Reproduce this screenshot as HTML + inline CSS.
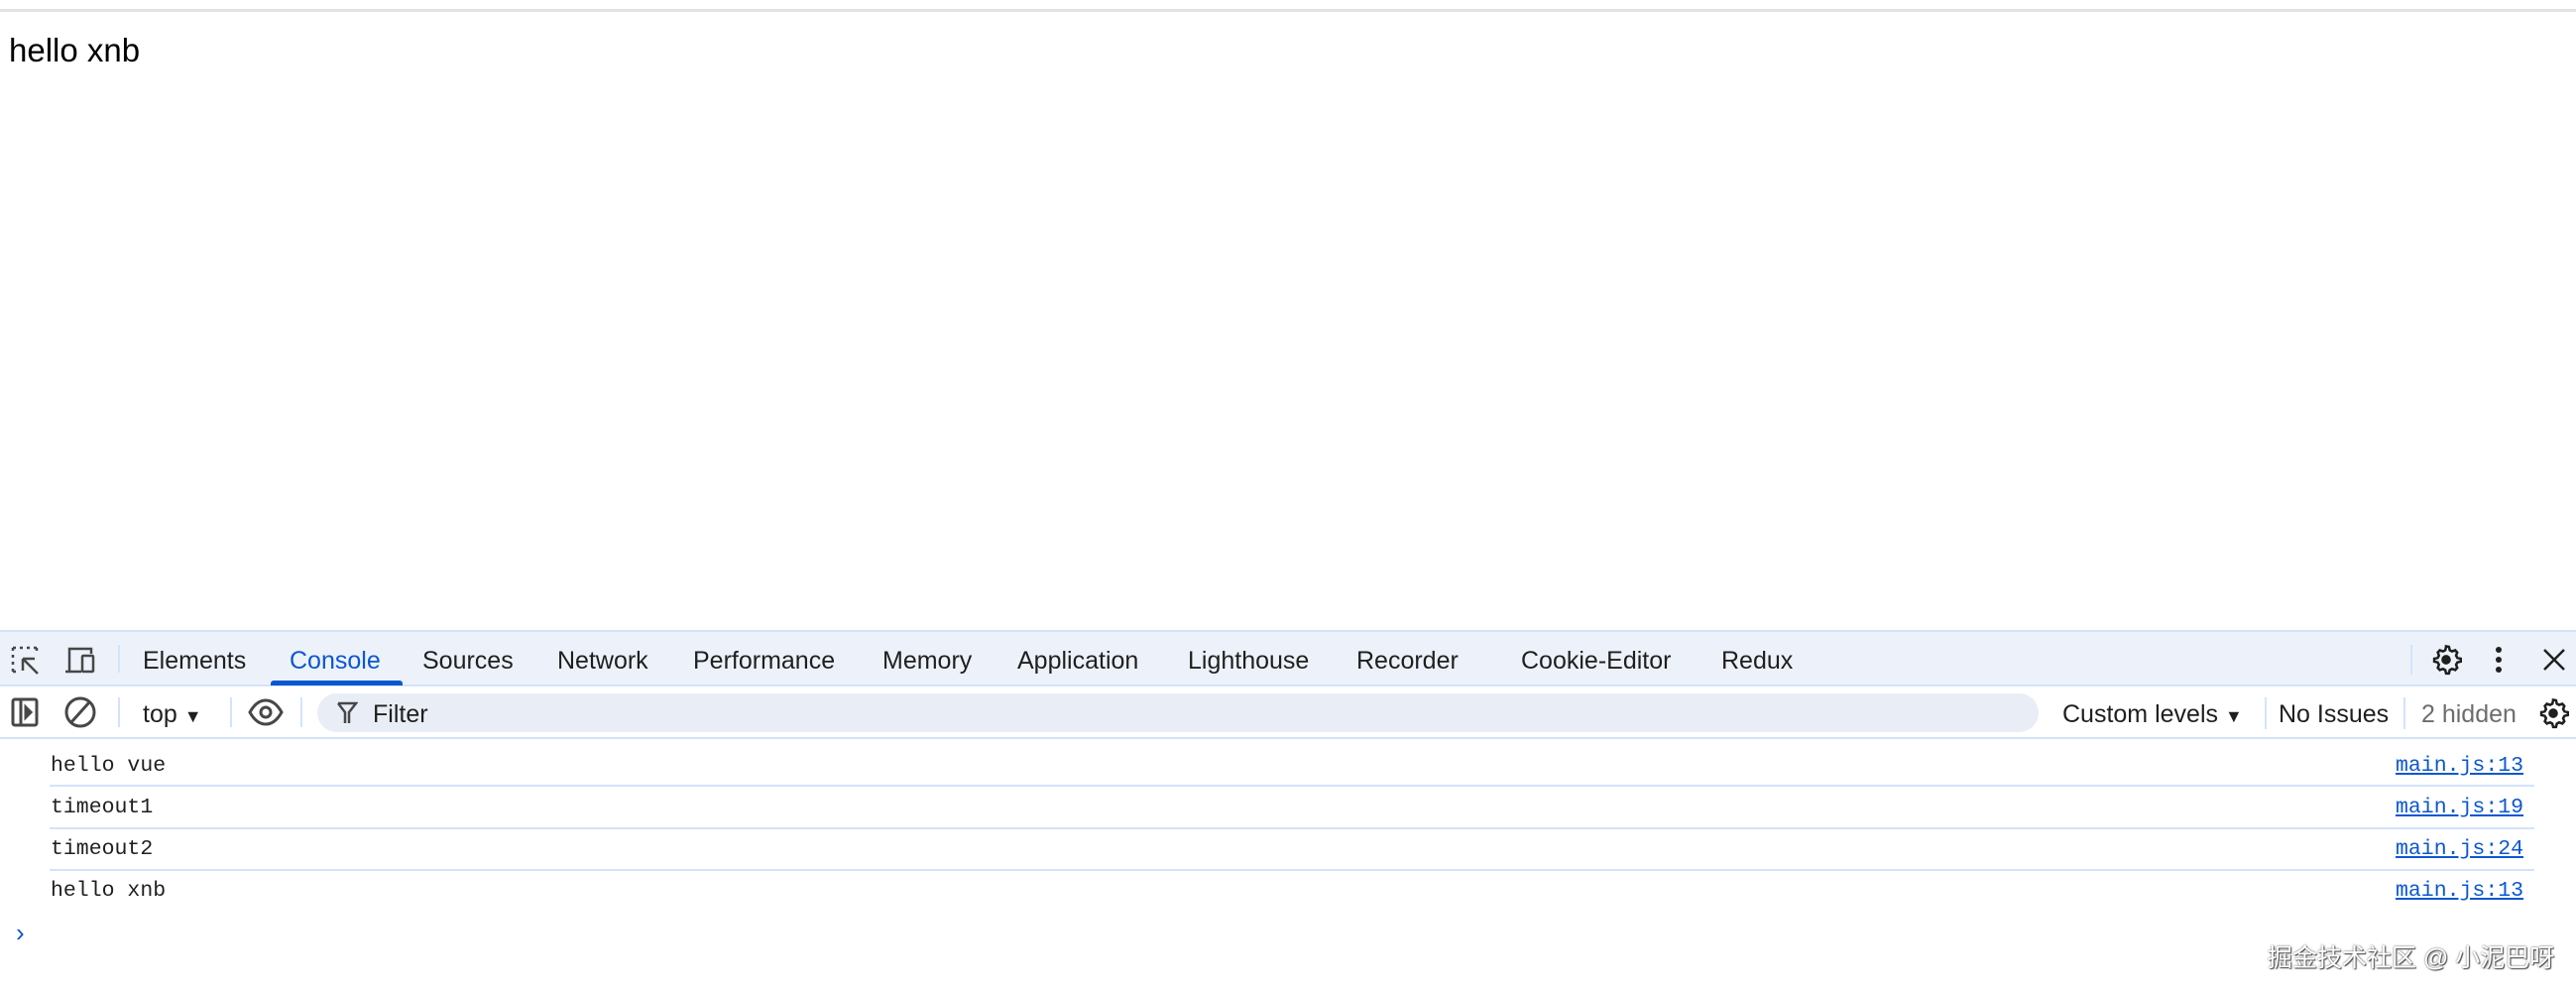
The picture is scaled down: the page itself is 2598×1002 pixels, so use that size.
<!DOCTYPE html>
<html><head><meta charset="utf-8"><style>
*{margin:0;padding:0;box-sizing:border-box}
body{width:2598px;height:1002px;background:#fff;position:relative;overflow:hidden;font-family:"Liberation Sans",sans-serif;color:#1f1f1f}
.a{position:absolute;white-space:nowrap}
.tab{position:absolute;top:652px;font-size:25px;color:#1f1f1f}
.mono{font-family:"Liberation Mono",monospace;font-size:21.5px;color:#1f1f1f}
.link{font-family:"Liberation Mono",monospace;font-size:21.5px;color:#0b57d0;text-decoration:underline}
.sep{position:absolute;width:2px;background:#d3e3fd}
.tb{font-size:25px;top:706px}
</style></head><body>
<div class="a" style="left:0;top:9px;width:2598px;height:3px;background:#e3e3e3"></div>
<div class="a" style="left:9px;top:32px;font-size:33px;color:#000">hello xnb</div>

<div class="a" style="left:0;top:635px;width:2598px;height:57px;background:#edf2fa;border-top:2px solid #d3e3fd;border-bottom:2px solid #d3e3fd"></div>
<svg class="a" style="left:10px;top:650px" width="32" height="32" viewBox="0 0 32 32" fill="none" stroke="#474747" stroke-width="2.5">
<path d="M3 3h3M10 3h3M17 3h3M24 3h3M27 3v3M3 3v3M3 10v3M3 17v3M3 24v3M3 27h3" /><path d="M13 14l12 0M13 14v12M13 14l15 15"/></svg>
<svg class="a" style="left:64px;top:650px" width="36" height="32" viewBox="0 0 36 32" fill="none" stroke="#474747" stroke-width="2.5">
<path d="M6 26V4h22v5M2 27h16"/><rect x="19" y="11" width="11" height="16" rx="1"/></svg>
<div class="sep" style="left:119px;top:650px;height:28px"></div>
<div class="tab" style="left:144px">Elements</div>
<div class="tab" style="left:292px;color:#0b57d0">Console</div>
<div class="a" style="left:273px;top:686px;width:133px;height:5px;background:#0b57d0;border-radius:3px 3px 0 0"></div>
<div class="tab" style="left:426px">Sources</div>
<div class="tab" style="left:562px">Network</div>
<div class="tab" style="left:699px">Performance</div>
<div class="tab" style="left:890px">Memory</div>
<div class="tab" style="left:1026px">Application</div>
<div class="tab" style="left:1198px">Lighthouse</div>
<div class="tab" style="left:1368px">Recorder</div>
<div class="tab" style="left:1534px">Cookie-Editor</div>
<div class="tab" style="left:1736px">Redux</div>
<div class="sep" style="left:2431px;top:650px;height:30px"></div>
<svg class="a" style="left:2450px;top:648px" width="34" height="34" viewBox="0 0 24 24" fill="none" stroke="#1f1f1f" stroke-width="1.8"><path d="M12 2.5l2 .3.6 2.4 1.6.9 2.3-.8 1.4 1.5-.8 2.3.9 1.6 2.4.6v2l-2.4.6-.9 1.6.8 2.3-1.4 1.5-2.3-.8-1.6.9-.6 2.4h-2l-.6-2.4-1.6-.9-2.3.8-1.4-1.5.8-2.3-.9-1.6-2.4-.6v-2l2.4-.6.9-1.6-.8-2.3 1.4-1.5 2.3.8 1.6-.9.6-2.4z"/><circle cx="12" cy="12" r="2.5" fill="#1f1f1f"/></svg>
<svg class="a" style="left:2510px;top:650px" width="20" height="32"><circle cx="10" cy="5" r="3" fill="#1f1f1f"/><circle cx="10" cy="15" r="3" fill="#1f1f1f"/><circle cx="10" cy="25" r="3" fill="#1f1f1f"/></svg>
<svg class="a" style="left:2563px;top:652px" width="26" height="26" stroke="#1f1f1f" stroke-width="2.5"><path d="M3 3l20 20M23 3L3 23"/></svg>

<div class="a" style="left:0;top:692px;width:2598px;height:53px;border-bottom:2px solid #d3e3fd"></div>
<svg class="a" style="left:10px;top:702px" width="32" height="32" fill="none" stroke="#474747" stroke-width="3"><rect x="3" y="3" width="24" height="26" rx="2"/><path d="M11 3v26"/><path d="M16 11l5 5-5 5z" fill="#474747"/></svg>
<svg class="a" style="left:64px;top:701px" width="34" height="34" fill="none" stroke="#474747" stroke-width="3"><circle cx="17" cy="17" r="14"/><path d="M8 27L26 7"/></svg>
<div class="sep" style="left:119px;top:703px;height:30px"></div>
<div class="a tb" style="left:144px">top <span style="font-size:18px">▼</span></div>
<div class="sep" style="left:232px;top:703px;height:30px"></div>
<svg class="a" style="left:249px;top:703px" width="38" height="30" fill="none" stroke="#474747" stroke-width="3"><path d="M3 15C8 6 14 3 19 3s11 3 16 12c-5 9-11 12-16 12S8 24 3 15z"/><circle cx="19" cy="15" r="5"/></svg>
<div class="sep" style="left:303px;top:703px;height:30px"></div>
<div class="a" style="left:320px;top:699px;width:1736px;height:39px;background:#e9eef6;border-radius:20px"></div>
<svg class="a" style="left:339px;top:707px" width="22" height="24" fill="none" stroke="#474747" stroke-width="2.5"><path d="M2 2h18l-7 9v11M2 2l7 9v11"/></svg>
<div class="a tb" style="left:376px">Filter</div>
<div class="a tb" style="left:2080px">Custom levels <span style="font-size:18px">▼</span></div>
<div class="sep" style="left:2284px;top:703px;height:32px"></div>
<div class="a tb" style="left:2298px">No Issues</div>
<div class="sep" style="left:2424px;top:703px;height:32px"></div>
<div class="a tb" style="left:2442px;color:#6d6d6d">2 hidden</div>
<svg class="a" style="left:2558px;top:702px" width="34" height="34" viewBox="0 0 24 24" fill="none" stroke="#1f1f1f" stroke-width="1.8"><path d="M12 2.5l2 .3.6 2.4 1.6.9 2.3-.8 1.4 1.5-.8 2.3.9 1.6 2.4.6v2l-2.4.6-.9 1.6.8 2.3-1.4 1.5-2.3-.8-1.6.9-.6 2.4h-2l-.6-2.4-1.6-.9-2.3.8-1.4-1.5.8-2.3-.9-1.6-2.4-.6v-2l2.4-.6.9-1.6-.8-2.3 1.4-1.5 2.3.8 1.6-.9.6-2.4z"/><circle cx="12" cy="12" r="2.5" fill="#1f1f1f"/></svg>

<div class="a mono" style="left:51px;top:760px">hello vue</div>
<div class="a link" style="left:2416px;top:760px">main.js:13</div>
<div class="a" style="left:50px;top:791px;width:2506px;height:2px;background:#d3e3fd"></div>
<div class="a mono" style="left:51px;top:802px">timeout1</div>
<div class="a link" style="left:2416px;top:802px">main.js:19</div>
<div class="a" style="left:50px;top:834px;width:2506px;height:2px;background:#d3e3fd"></div>
<div class="a mono" style="left:51px;top:844px">timeout2</div>
<div class="a link" style="left:2416px;top:844px">main.js:24</div>
<div class="a" style="left:50px;top:876px;width:2506px;height:2px;background:#d3e3fd"></div>
<div class="a mono" style="left:51px;top:886px">hello xnb</div>
<div class="a link" style="left:2416px;top:886px">main.js:13</div>
<div class="a" style="left:16px;top:925px;font-size:26px;color:#0b57d0">›</div>
<div class="a" style="left:2287px;top:946px;font-size:25px;color:#fff;text-shadow:0 0 2px #555,1px 1px 1px #444;font-family:'Liberation Sans','Noto Sans CJK SC',sans-serif">掘金技术社区 @ 小泥巴呀</div>
</body></html>
